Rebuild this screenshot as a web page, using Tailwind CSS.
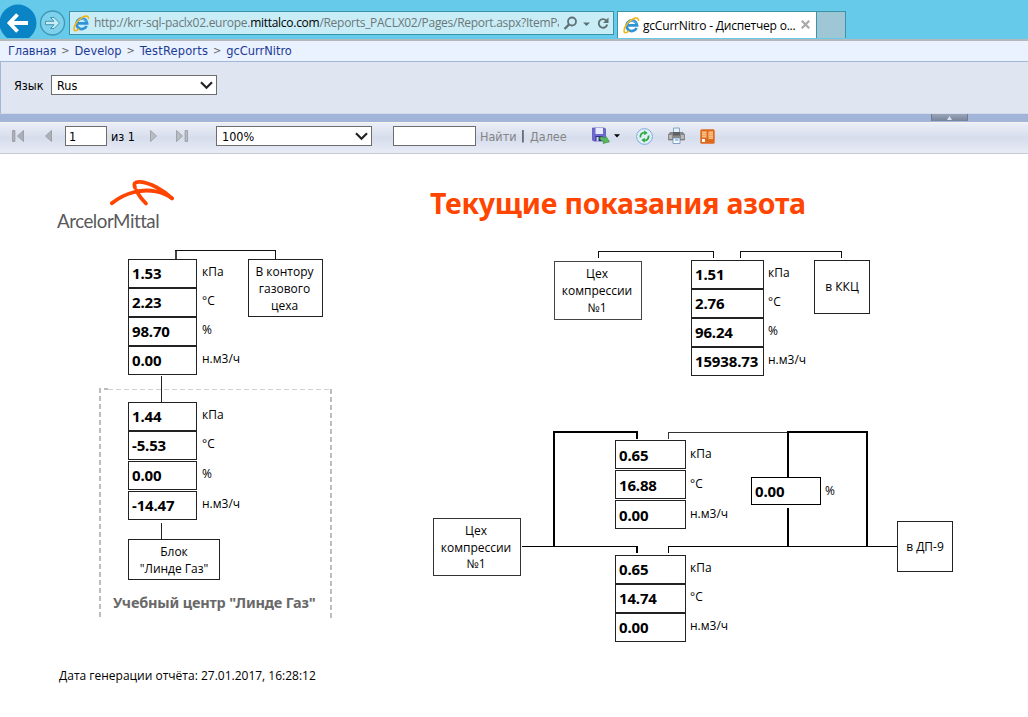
<!DOCTYPE html>
<html lang="ru">
<head>
<meta charset="utf-8">
<title>gcCurrNitro - Диспетчер отчётов</title>
<script src="https://cdn.jsdelivr.net/npm/@tailwindcss/browser@4"></script>
</head>
<body class="w-[1028px] h-[717px] overflow-hidden bg-white text-black flex flex-col">
<svg class="hidden">
  <symbol id="ie" viewBox="0 0 18 18">
    <path d="M14.4 11.6A5.6 5.6 0 1 1 14.9 8.9H5.2" fill="none" stroke="#2f93d6" stroke-width="2.9"/>
    <path d="M4.2 8.2A5.2 5.2 0 0 1 14 7" fill="none" stroke="#74c4f0" stroke-width="1"/>
    <path d="M1.6 16.2C-.2 13 4.2 5.500 9.500 2.600 13 .7 16.600.3 16.400 3.600" fill="none" stroke="#f3b51b" stroke-width="1.7" stroke-linecap="round"/>
    <path d="M1.600 16.200C2.600 17.200 5 16 6.200 15" fill="none" stroke="#f3b51b" stroke-width="1.500" stroke-linecap="round"/>
  </symbol>
</svg>

<!-- Browser bar -->
<header class="h-[41px] shrink-0 bg-[#66caea] border-b-2 border-[#b4b8b8] flex overflow-hidden">
  <svg class="w-[69px] h-[38px] shrink-0" viewBox="0 0 69 38">
    <circle cx="18" cy="23" r="18.500" fill="#0a84c4"/>
    <path d="M28 23H10.500M17.500 14.500 9.500 23 17.500 31.500" fill="none" stroke="#fff" stroke-width="3.800"/>
    <circle cx="52.500" cy="23" r="12" fill="#7dd1ec" stroke="#3f98b3" stroke-width="1.300"/>
    <path d="M45.500 21.300H54L50.500 17.500H54L59.500 23 54 28.500H50.500L54 24.700H45.500Z" fill="#c9edf7" stroke="#4396b0" stroke-width="1"/>
  </svg>
  <div class="mt-[11px] h-6 w-[545px] shrink-0 border border-[#3c93a8] bg-[#c9edf6] flex items-center pl-[3px] text-[#6b7779]">
    <svg class="size-[17px] shrink-0"><use href="#ie"/></svg>
    <span class="ml-1 w-[465px] overflow-hidden whitespace-nowrap font-['Open_Sans',sans-serif] text-[12px] leading-5 tracking-[-0.28px]">http://krr-sql-paclx02.europe.<span class="text-black">mittalco.com</span>/Reports_PACLX02/Pages/Report.aspx?ItemPa</span>
    <svg class="ml-1 h-5 w-[50px] shrink-0" viewBox="0 0 50 20" fill="none" stroke="#607174">
      <circle cx="9" cy="8.500" r="4" stroke-width="1.800"/><path d="M6 11.500 1.500 16" stroke-width="2.400"/>
      <path d="M20 9.500H27L23.500 13Z" fill="#607174" stroke="none"/>
      <path d="M43.300 7.600A4.300 4.300 0 1 0 44.200 11.500" stroke-width="1.900"/><path d="M45.500 4.500V10H40Z" fill="#607174" stroke="none"/>
    </svg>
  </div>
  <div class="ml-[3px] mt-[11px] h-[27px] w-[200px] border border-b-0 border-[#3c93a8] bg-white flex items-center pl-[5px]">
    <svg class="size-[17px] shrink-0"><use href="#ie"/></svg>
    <span class="ml-[3px] w-[157px] pt-px whitespace-nowrap font-['Open_Sans',sans-serif] text-[12px] leading-5 tracking-[-0.2px]">gcCurrNitro - Диспетчер о...</span>
    <svg class="size-[9px] shrink-0 mb-px ml-px" viewBox="0 0 8 8"><path d="M.7.7 7.300 7.300M7.300.7.7 7.300" stroke="#aaa" stroke-width="2"/></svg>
  </div>
  <div class="mt-[11px] h-[27px] w-[29px] border border-l-0 border-b-0 border-[#3c93a8] bg-[#9fc6d5]"></div>
</header>

<!-- Breadcrumb -->
<nav class="h-[21px] shrink-0 bg-[#eaf1ff] border-b border-[#a3b5d8] pl-2 pb-px flex items-center gap-[5px] font-['DejaVu_Sans_Condensed','DejaVu_Sans',sans-serif] text-[12.700px] leading-5 text-[#1c3b94] whitespace-nowrap">
  <a class="tracking-[-0.15px]">Главная</a><span class="text-[#666] text-[11px]">&gt;</span><a>Develop</a><span class="text-[#666] text-[11px]">&gt;</span><a class="tracking-[0.200px]">TestReports</a><span class="text-[#666] text-[11px]">&gt;</span><a>gcCurrNitro</a>
</nav>

<!-- Parameters -->
<section class="h-[52px] shrink-0 bg-[#dfe5f1] border-l border-b border-l-[#a3b5d8] border-b-[#d3dbeb] flex items-start pl-[13px] pt-[13px] font-['DejaVu_Sans_Condensed','DejaVu_Sans',sans-serif] text-[12.500px]">
  <span class="w-[37px] leading-[21px]">Язык</span>
  <div class="w-[166px] h-5 border border-[#6d6d6d] bg-white flex items-center justify-between pl-[5px] pr-[3px]"><span class="leading-4 pt-px">Rus</span>
    <svg class="w-[13px] h-[9px]" viewBox="0 0 13 9"><path d="M1 1.300 6.500 6.800 12 1.300" fill="none" stroke="#222" stroke-width="2.200"/></svg></div>
</section>
<div class="h-2 shrink-0 bg-[#a3b4d9] flex justify-end pr-[60px]">
  <div class="w-[37px] h-[7px] bg-linear-to-b from-[#9aa5ba] to-[#78849a] border-x border-[#6f7c93] flex items-center justify-center"><svg class="w-[5px] h-[4px]" viewBox="0 0 5 4"><path d="M0 4 2.500 0 5 4Z" fill="#dbe2ee"/></svg></div>
</div>

<!-- Report toolbar -->
<section class="h-8 shrink-0 border-t border-t-[#f6f4ee] border-b border-b-[#c5ccd8] bg-linear-to-b from-[#ebeef7] from-0% via-[#d6ddec] via-50% to-[#e8ecf6] flex items-center pb-1 pl-3 font-['DejaVu_Sans_Condensed','DejaVu_Sans',sans-serif] text-[12.500px] whitespace-nowrap">
  <svg class="w-[12px] h-[12px]" viewBox="0 0 12 12" fill="#adb0b6" stroke="#8e9196" stroke-width=".7"><path d="M.5.500H2.900V11.500H.5ZM11.500.5V11.500L5.500 6Z"/></svg>
  <svg class="ml-[21px] w-[7px] h-[12px]" viewBox="0 0 7 12" fill="#adb0b6" stroke="#8e9196" stroke-width=".7"><path d="M6.500.5V11.500L.5 6Z"/></svg>
  <div class="ml-[13px] w-[42px] h-5 border border-[#6d6d6d] bg-white pl-[3px] leading-[19px]">1</div>
  <span class="ml-1 w-[38px] pt-0.5">из 1</span>
  <svg class="ml-px w-[7px] h-[12px]" viewBox="0 0 7 12" fill="#b9bcc2" stroke="#8e9196" stroke-width=".7"><path d="M.5.500V11.500L6.500 6Z"/></svg>
  <svg class="ml-[19px] w-[12px] h-[12px]" viewBox="0 0 12 12" fill="#b9bcc2" stroke="#8e9196" stroke-width=".7"><path d="M9.100.500H11.500V11.500H9.100ZM.5.500V11.500L6.500 6Z"/></svg>
  <div class="ml-[28px] w-[156px] h-5 border border-[#6d6d6d] bg-white flex items-center justify-between pl-[5px] pr-[3px]"><span class="leading-4 pt-px">100%</span>
    <svg class="w-[13px] h-[9px]" viewBox="0 0 13 9"><path d="M1 1.300 6.500 6.800 12 1.300" fill="none" stroke="#222" stroke-width="2.200"/></svg></div>
  <div class="ml-[21px] w-[83px] h-5 border border-[#6d6d6d] bg-white"></div>
  <span class="ml-1 w-[41px] pt-0.5 text-[#858585]">Найти</span><span class="w-[9px]">|</span><span class="w-[62px] pt-0.5 text-[#858585]">Далее</span>
  <svg class="w-[18px] h-[18px]" viewBox="0 0 18 18">
    <path d="M.5 1H12.500L13.500 2V14H1.500L.5 13Z" fill="#6c6ad0" stroke="#5555b4" stroke-width=".8"/>
    <path d="M3.500 1H11V7H3.500Z" fill="#e6eafa"/><path d="M3.500 9H10.500V14H3.500Z" fill="#2f2f7c"/><path d="M4.500 10H6.500V14H4.500Z" fill="#d4daf2"/>
    <path d="M7.500 10.800C9 9.300 11.300 9.800 12.500 11.300L14 9.500 17.500 14.800 11 16.500 12.200 14.600C10.500 14.300 8.500 13.500 7.500 10.800Z" fill="#58ba5c" stroke="#3b8f48" stroke-width=".7"/>
  </svg>
  <svg class="ml-1 w-[6px] h-[4px]" viewBox="0 0 6 4"><path d="M0 .3H6L3 3.500Z"/></svg>
  <svg class="ml-4 w-[17px] h-[17px]" viewBox="0 0 17 17">
    <circle cx="8.500" cy="8.500" r="7.900" fill="#dff0fb" stroke="#80add8" stroke-width="1"/>
    <path d="M4.500 9.500C4 6.500 6 4.500 8.500 4.700M12.500 7.500C13 10.500 11 12.500 8.500 12.300" fill="none" stroke="#2fa83c" stroke-width="1.800"/>
    <path d="M8.200 2.300 11.700 5 8.200 7.300ZM8.800 14.700 5.300 12 8.800 9.700Z" fill="#2fa83c"/>
  </svg>
  <svg class="ml-[15px] w-[17px] h-[18px]" viewBox="0 0 17 18">
    <path d="M5.500 1H11.500V8H5.500Z" fill="#e5f1fb" stroke="#6f94b8" stroke-width=".8"/>
    <path d="M2 5.500H15L16.500 7.500V13H.5V7.500Z" fill="#8a8a8a" stroke="#666" stroke-width=".6"/>
    <path d="M5 5H12V8.500H5Z" fill="#5d6064"/><path d="M1 8H4V12H1ZM13 8H16V12H13Z" fill="#b8b8b8"/>
    <path d="M5 11H12V16.500H5Z" fill="#f6fafe" stroke="#6b8fb3" stroke-width=".8"/><path d="M7 13H10.500" stroke="#4a90d0"/>
  </svg>
  <svg class="ml-[15px] w-[15px] h-[15px]" viewBox="0 0 15 15">
    <rect x=".3" y=".3" width="14.400" height="14.400" rx="1.500" fill="#df6a1e"/>
    <path d="M2 2.500H6.500V8.500H2ZM8.500 2.500H13V10H8.500Z" fill="#fcc48c"/><path d="M2 4.500H6.500M2 6.500H6.500M8.500 4.500H13M8.500 6.500H13M8.500 8.500H13" stroke="#f09a50" stroke-width=".8"/>
    <path d="M2 10H5V13H2Z" fill="#fff"/>
  </svg>
</section>

<!-- Report diagram -->
<main class="relative flex-1 font-['Open_Sans','Noto_Sans',sans-serif] text-[12px]">
  <svg class="absolute inset-0 w-[1028px] h-[563px]" viewBox="0 154 1028 563" fill="none" stroke="#000">
    <g stroke="#ff4500" stroke-width="3.800" stroke-linecap="round" stroke-linejoin="round">
      <path d="M111.800 203.300C125 192.500 142 188.500 156 191.500 163 193 168 195.500 172 198.300"/>
      <path d="M172 198.300C163 190 150 182.500 140 181.800 134.500 181.500 133.500 184 135 187.500"/>
      <path d="M136.500 190.500C138.500 195 142.500 200 146 203.500"/>
    </g>
    <g shape-rendering="crispEdges">
      <path d="M176 259V251" stroke="#444" stroke-width="2"/>
      <path d="M175 250.500H275.500V259" stroke="#111"/>
      <path d="M161.500 376V402M161.500 523V539" stroke="#222"/>
      <path d="M598.500 258V251.500H713.500V258M740.500 258V251.500H841.500V258" stroke="#111"/>
      <path d="M522 546.500H636.500V553M668.500 553V546.500H897"/>
      <path d="M637 546V553" stroke-width="2"/>
      <path d="M668.500 439V432.500H788" stroke="#333"/>
      <path d="M554 547V432H637V439" stroke-width="2"/>
      <path d="M788 477V432H867V547M788 508V547" stroke-width="2"/>
      <path d="M100 388V619" stroke="#bdbdbd" stroke-width="2" stroke-dasharray="5 3"/>
      <path d="M331 389V619" stroke="#bdbdbd" stroke-width="2" stroke-dasharray="5 3"/>
      <path d="M104 389H108" stroke="#bdbdbd" stroke-width="2"/>
      <path d="M108 389.500H330" stroke="#cfcfcf" stroke-dasharray="5 3"/>
    </g>
  </svg>

  <div class="absolute left-[57px] top-[55px] font-['Lato',sans-serif] text-[18.800px] leading-[24px] tracking-[-0.500px] text-[#58595b]">ArcelorMittal</div>
  <h1 class="absolute left-[430px] top-[29px] font-['Noto_Sans',sans-serif] text-[28.500px] leading-[40px] font-bold tracking-[-0.230px] text-[#ff4500] whitespace-nowrap">Текущие показания азота</h1>

  <!-- Office line readings -->
  <div class="absolute left-[128px] top-[105px] grid grid-cols-[69px_auto] gap-x-[5px] auto-rows-[29px] whitespace-nowrap">
    <b class="border border-[#222] pl-[3px] font-['Noto_Sans',sans-serif] text-[15px] leading-[27px] tracking-[-0.15px]">1.53</b><span class="leading-[25px]">кПа</span>
    <b class="border border-[#222] pl-[3px] font-['Noto_Sans',sans-serif] text-[15px] leading-[27px] tracking-[-0.15px]">2.23</b><span class="leading-[25px]">°C</span>
    <b class="border border-[#222] pl-[3px] font-['Noto_Sans',sans-serif] text-[15px] leading-[27px] tracking-[-0.15px]">98.70</b><span class="leading-[25px]">%</span>
    <b class="border border-[#222] pl-[3px] font-['Noto_Sans',sans-serif] text-[15px] leading-[27px] tracking-[-0.15px]">0.00</b><span class="leading-[25px]">н.м3/ч</span>
  </div>
  <div class="absolute left-[248px] top-[105px] w-[75px] h-[58px] border border-[#222] pt-[3px] pr-0.5 text-center leading-[17px]">В контору<br>газового<br>цеха</div>

  <!-- Linde Gas readings -->
  <div class="absolute left-[128px] top-[248px] grid grid-cols-[69px_auto] gap-x-[5px] grid-rows-[29px_30px_30px_29px] whitespace-nowrap">
    <b class="h-[29px] border border-[#222] pl-[3px] font-['Noto_Sans',sans-serif] text-[15px] leading-[27px] tracking-[-0.15px]">1.44</b><span class="leading-[25px]">кПа</span>
    <b class="h-[29px] border border-[#222] pl-[3px] font-['Noto_Sans',sans-serif] text-[15px] leading-[27px] tracking-[-0.15px]">-5.53</b><span class="leading-[25px]">°C</span>
    <b class="h-[29px] border border-[#222] pl-[3px] font-['Noto_Sans',sans-serif] text-[15px] leading-[27px] tracking-[-0.15px]">0.00</b><span class="leading-[25px]">%</span>
    <b class="h-[29px] border border-[#222] pl-[3px] font-['Noto_Sans',sans-serif] text-[15px] leading-[27px] tracking-[-0.15px]">-14.47</b><span class="leading-[25px]">н.м3/ч</span>
  </div>
  <div class="absolute left-[128px] top-[385px] w-[92px] h-[41px] border border-[#222] pt-[3px] text-center leading-[17px]">Блок<br>"Линде Газ"</div>
  <div class="absolute left-[113px] top-[438px] font-['Noto_Sans',sans-serif] text-[14.500px] leading-[20px] tracking-[-0.200px] font-bold text-[#696969] whitespace-nowrap">Учебный центр "Линде Газ"</div>

  <!-- Compression shop to KKC -->
  <div class="absolute left-[554px] top-[107px] w-[88px] h-[59px] border border-[#444] pt-[3px] pr-0.5 text-center leading-[17px]">Цех<br>компрессии<br>№1</div>
  <div class="absolute left-[691px] top-[106px] grid grid-cols-[73px_auto] gap-x-[4px] auto-rows-[29px] whitespace-nowrap">
    <b class="border border-[#222] pl-[3px] font-['Noto_Sans',sans-serif] text-[15px] leading-[27px] tracking-[-0.15px]">1.51</b><span class="leading-[25px]">кПа</span>
    <b class="border border-[#222] pl-[3px] font-['Noto_Sans',sans-serif] text-[15px] leading-[27px] tracking-[-0.15px]">2.76</b><span class="leading-[25px]">°C</span>
    <b class="border border-[#222] pl-[3px] font-['Noto_Sans',sans-serif] text-[15px] leading-[27px] tracking-[-0.15px]">96.24</b><span class="leading-[25px]">%</span>
    <b class="border border-[#222] pl-[3px] font-['Noto_Sans',sans-serif] text-[15px] leading-[27px] tracking-[-0.15px]">15938.73</b><span class="leading-[25px]">н.м3/ч</span>
  </div>
  <div class="absolute left-[814px] top-[106px] w-[56px] h-[54px] border border-[#222] flex items-center justify-center">в ККЦ</div>

  <!-- Compression shop to DP-9 -->
  <div class="absolute left-[433px] top-[364px] w-[88px] h-[58px] border border-[#333] pt-[4px] pr-0.5 text-center leading-[16.500px]">Цех<br>компрессии<br>№1</div>
  <div class="absolute left-[615px] top-[286px] grid grid-cols-[71px_auto] gap-x-[4px] auto-rows-[29px] gap-y-px whitespace-nowrap">
    <b class="border border-[#222] pl-[3px] pt-px font-['Noto_Sans',sans-serif] text-[15px] leading-[27px] tracking-[-0.15px]">0.65</b><span class="leading-[27px]">кПа</span>
    <b class="border border-[#222] pl-[3px] pt-px font-['Noto_Sans',sans-serif] text-[15px] leading-[27px] tracking-[-0.15px]">16.88</b><span class="leading-[27px]">°C</span>
    <b class="border border-[#222] pl-[3px] pt-px font-['Noto_Sans',sans-serif] text-[15px] leading-[27px] tracking-[-0.15px]">0.00</b><span class="leading-[27px]">н.м3/ч</span>
  </div>
  <div class="absolute left-[615px] top-[401px] grid grid-cols-[71px_auto] gap-x-[4px] auto-rows-[29px] whitespace-nowrap">
    <b class="border border-[#222] pl-[3px] font-['Noto_Sans',sans-serif] text-[15px] leading-[27px] tracking-[-0.15px]">0.65</b><span class="leading-[25px]">кПа</span>
    <b class="border border-[#222] pl-[3px] font-['Noto_Sans',sans-serif] text-[15px] leading-[27px] tracking-[-0.15px]">14.74</b><span class="leading-[25px]">°C</span>
    <b class="border border-[#222] pl-[3px] font-['Noto_Sans',sans-serif] text-[15px] leading-[27px] tracking-[-0.15px]">0.00</b><span class="leading-[25px]">н.м3/ч</span>
  </div>
  <div class="absolute left-[751px] top-[323px] grid grid-cols-[70px_auto] gap-x-[4px] auto-rows-[28px]">
    <b class="border border-black pl-[3px] font-['Noto_Sans',sans-serif] text-[15px] leading-[27px] tracking-[-0.15px] bg-white">0.00</b><span class="leading-[27px]">%</span>
  </div>
  <div class="absolute left-[897px] top-[367px] w-[56px] h-[51px] border border-[#222] flex items-center justify-center">в ДП-9</div>

  <div class="absolute left-[59px] top-[512px] leading-[20px] whitespace-nowrap">Дата генерации отчёта: 27.01.2017, 16:28:12</div>
</main>
</body>
</html>
